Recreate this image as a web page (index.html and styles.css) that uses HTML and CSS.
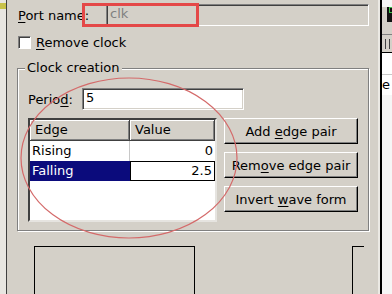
FILE: index.html
```html
<!DOCTYPE html>
<html lang="en">
<head>
<meta charset="utf-8" />
<meta name="viewport" content="width=device-width, initial-scale=1" />
<link rel="stylesheet" href="styles.css">
</head>
<body>
<div class="screen">
  <div class="dock-left"><span class="dock-left-icon"></span></div>

  <div class="dialog">
    <div class="row port-row">
      <label class="label port-label"><u>P</u>ort name:</label>
      <div class="field field-off">clk</div>
    </div>
    <div class="row check-row">
      <span class="checkbox"></span>
      <span class="check-text"><u>R</u>emove clock</span>
    </div>

    <fieldset class="group">
      <legend>Clock creation</legend>
      <div class="row period-row">
        <label class="label period-label">Perio<u>d</u>:</label>
        <div class="field period-field">5</div>
      </div>
      <div class="edges">
        <div class="table">
          <div class="thead">
            <div class="th col-edge">Edge</div>
            <div class="th col-value">Value</div>
          </div>
          <div class="tr">
            <div class="td col-edge">Rising</div>
            <div class="td col-value num">0</div>
          </div>
          <div class="tr selected">
            <div class="td col-edge">Falling</div>
            <div class="td col-value num editing">2.5</div>
          </div>
        </div>
        <div class="buttons">
          <button class="btn">Add <u>e</u>dge pair</button>
          <button class="btn">Rem<u>o</u>ve edge pair</button>
          <button class="btn">Invert <u>w</u>ave form</button>
        </div>
      </div>
    </fieldset>

    <div class="lower">
      <div class="pane pane-a"></div>
      <div class="pane pane-b"></div>
    </div>
  </div>

  <div class="edge-line"></div>

  <div class="dock-right">
    <div class="dock-top"><span class="dock-icon"><span></span></span></div>
    <div class="dock-tools"><span class="tool-mark"></span></div>
    <div class="dock-list">
      <div class="dock-item"></div>
      <div class="dock-item dock-text">e</div>
    </div>
  </div>

  <svg class="marks" width="392" height="294" viewBox="0 0 392 294">
    <rect x="83.5" y="4.5" width="114" height="21" fill="none" stroke="#e44848" stroke-width="3" />
    <ellipse cx="129" cy="158" rx="108" ry="80" fill="none" stroke="#d46a6a" stroke-width="1.2" />
  </svg>
</div>
</body>
</html>
```

FILE: styles.css
```css
html {font-family: "DejaVu Sans", sans-serif;}
body {margin: 0; font-size: 13px; color: #000;}
u {text-decoration: underline; text-underline-offset: 2px;}

.screen {position: relative; display: flex; width: 392px; height: 294px; overflow: hidden; background: #d4d0c8;}

/* side docks */
.dock-left {width: 6px; border-right: 1px solid #404040; background: #e8e6e1;}
.dock-left-icon {display: block; height: 6px; margin-top: 3px; background: #c8c24a;}
.edge-line {width: 2px; background: #000;}
.dock-right {width: 10px; background: #f6f6f6;}
.dock-top {height: 27px; background: #d4d0c8;}
.dock-icon {display: block; width: 16px; height: 15px; margin: 3px 0 0 5px; background: #111;}
.dock-icon span {display: block; width: 6px; height: 4px; margin: 7px 0 0 2px; border: 1px solid #3ec24a;}
.dock-tools {height: 17px; border-top: 1px solid #808080; border-bottom: 1px solid #000; background: #d4d0c8;}
.tool-mark {display: block; width: 3px; height: 10px; margin: 4px 0 0 3px; border-left: 1px solid #404040; border-right: 1px solid #404040;}
.dock-list {background: #fff;}
.dock-item {height: 21px; border-bottom: 1px solid #c8c8c8;}
.dock-text {height: 20px; line-height: 20px; border: 0; font-size: 13px;}

/* dialog */
.dialog {box-sizing: border-box; width: 373px; padding-left: 11px; border-right: 2px solid #ebe9e4;}
.row {display: flex; align-items: center;}
.label {white-space: nowrap;}
.field {box-sizing: border-box; height: 22px; line-height: 18px; padding-left: 3px; background: #fff;
    border: 1px solid; border-color: #808080 #fff #fff #808080;
    box-shadow: inset 1px 1px 0 #404040, inset -1px -1px 0 #d4d0c8;}

.port-row {height: 22px; margin-top: 4px;}
.port-label {width: 88px;}
.field-off {width: 263px; background: #d4d0c8; color: #808080;}

.check-row {height: 13px; margin-top: 10px; line-height: 13px;}
.checkbox {box-sizing: border-box; width: 13px; height: 13px; background: #fff;
    border: 1px solid; border-color: #808080 #fff #fff #808080; box-shadow: inset 1px 1px 0 #404040;}
.check-text {margin-left: 5px;}

/* clock creation group */
.group {box-sizing: border-box; width: 352px; margin: 11px 0 0 -1px; padding: 12px 10px 8px 10px;
    border: 1px solid #808080; box-shadow: inset 1px 1px 0 #fff, 1px 1px 0 #fff;}
.group legend {margin-left: -3px; padding: 0 2px; line-height: 16px; background: #d4d0c8;}

.period-row {height: 22px;}
.period-label {width: 54px;}
.period-field {width: 162px;}

.edges {display: flex; margin-top: 8px;}
.table {box-sizing: border-box; width: 189px; height: 104px; background: #fff;
    border: 2px solid; border-color: #404040 #e6e4e0 #e6e4e0 #404040;}
.thead, .tr {display: flex;}
.col-edge {box-sizing: border-box; width: 100px;}
.col-value {box-sizing: border-box; width: 85px;}
.th {height: 21px; line-height: 20px; padding-left: 5px; background: #d4d0c8;
    border-right: 1px solid #404040; border-bottom: 1px solid #404040;
    box-shadow: inset 1px 1px 0 #fff, inset -1px -1px 0 #808080;}
.td {height: 20px; line-height: 20px; padding-left: 2px;}
.tr .col-edge {border-right: 1px solid #c8c8c8;}
.num {text-align: right; padding-right: 2px;}
.selected .col-edge {background: #0b0b7c; color: #fff; border-right-color: #0b0b7c;}
.editing {border: 1px solid #000; line-height: 18px;}

.buttons {display: flex; flex-direction: column; gap: 8px; margin-left: 7px;}
.btn {box-sizing: border-box; width: 134px; height: 26px; padding: 0; font: inherit; color: #000; background: #d4d0c8;
    border: 1px solid; border-color: #fff #000 #000 #fff; box-shadow: inset -1px -1px 0 #808080;}

/* lower panes */
.lower {display: flex; margin-top: 15px; height: 60px;}
.pane {box-sizing: border-box; height: 60px; border: 1px solid #000; border-bottom: 0;}
.pane-a {width: 161px; margin-left: 16px;}
.pane-b {width: 12px; margin-left: 157px; border-right: 0;}

/* annotation marks drawn over the capture */
.marks {position: absolute; left: 0; top: 0; pointer-events: none;}
```
